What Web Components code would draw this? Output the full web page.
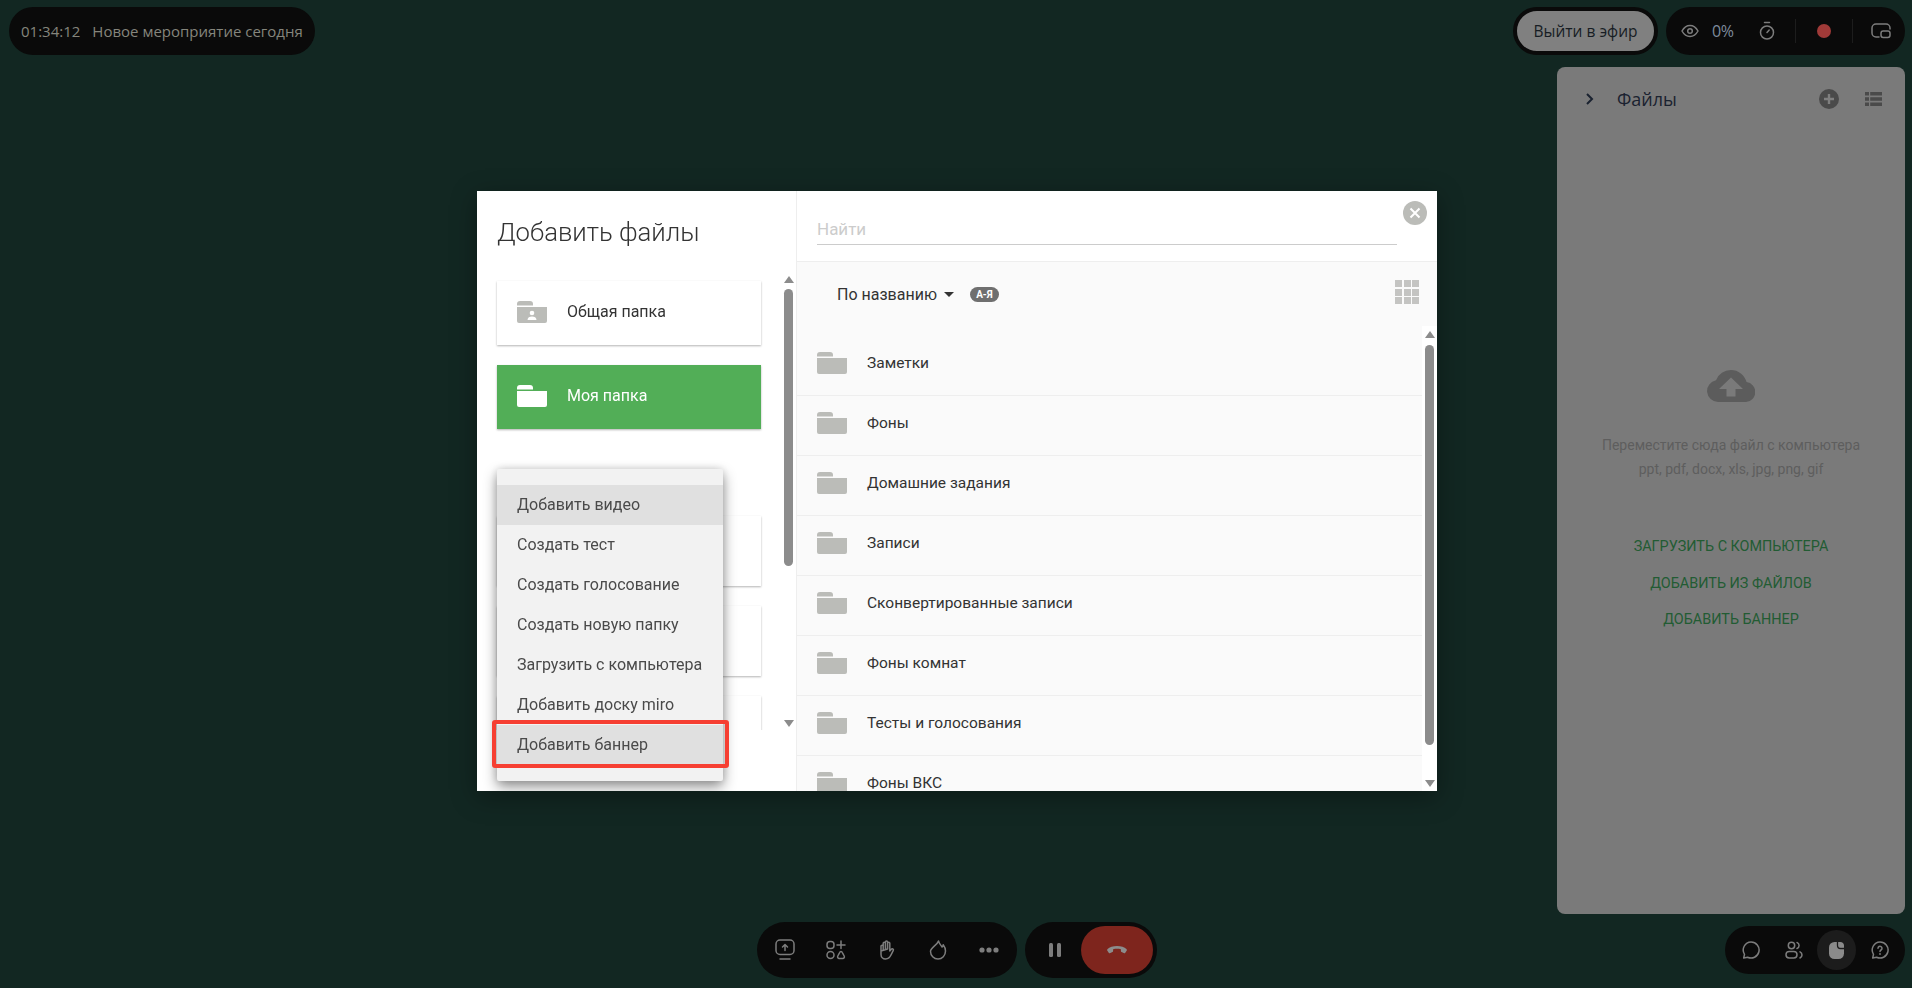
<!DOCTYPE html>
<html lang="ru"><head><meta charset="utf-8"><title>Файлы</title>
<style>
html,body{margin:0;height:100%;background:#122722;overflow:hidden}
</style></head><body>
<app-shell>
  <top-bar slot="top"></top-bar>
  <file-panel slot="panel"></file-panel>
  <bottom-bar slot="bottom"></bottom-bar>
</app-shell>
<add-files-modal></add-files-modal>
<script>
const S='fill="none" stroke="currentColor" stroke-width="1.5" stroke-linecap="round" stroke-linejoin="round"';
const svg=(w,h,body,attrs='')=>`<svg width="${w}" height="${h}" viewBox="0 0 ${w} ${h}" ${attrs}>${body}</svg>`;
const folder=(color,extra='')=>`<svg width="30" height="22" viewBox="0 0 30 22"><path fill="${color}" d="M0 4.600V3a3 3 0 0 1 3-3h10a3 3 0 0 1 3 3v1.600z"/><path fill="${color}" d="M0 6h30v14a2 2 0 0 1-2 2H2a2 2 0 0 1-2-2z"/>${extra}</svg>`;
function def(name,html,init){
  customElements.define(name,class extends HTMLElement{
    connectedCallback(){
      if(this.shadowRoot)return;
      const r=this.attachShadow({mode:'open'});
      r.innerHTML=typeof html==='function'?html(this):html;
      if(init)init(r,this);
    }
  });
}
def('app-shell',`<style>
:host{display:grid;grid-template-rows:67px 847px 1fr;width:1912px;height:988px;box-sizing:border-box;background:#122722}
.mid{display:flex;justify-content:flex-end;padding-right:7px;min-height:0}
</style>
<slot name="top"></slot><div class="mid"><slot name="panel"></slot></div><slot name="bottom"></slot>`);

def('top-bar',`<style>
:host{display:flex;justify-content:space-between;align-items:flex-start;padding:7px 7px 0 9px;font:15px "Open Sans",sans-serif;color:#85857c}
.pill{display:flex;align-items:center;height:48px;background:#0a0a0a;border-radius:24px;box-sizing:border-box}
.left{width:306px;padding-left:12px;gap:12px;white-space:nowrap}
.right{display:flex;gap:8px}
.live{width:145px;height:48px;box-sizing:border-box;border:4px solid #0a0a0a;border-radius:24px;background:#808080;color:#171d24;display:flex;align-items:center;justify-content:center;font-size:15.500px;white-space:nowrap}
.ctl{width:239px;padding-left:12px;color:#7d7d7d}
.s{width:24px;height:24px;display:flex;align-items:center;justify-content:center;flex:none}
.d{width:1px;height:24px;background:#1d1d1d;margin:0 16px;flex:none}
.dot{width:14px;height:14px;border-radius:50%;background:#a03a38}
.pct{margin:0 22px 0 10px;width:21px;color:#7e8a9c;font-size:16px;letter-spacing:-.5px}
svg{display:block}
</style>
<div class="pill left"><span>01:34:12</span><span>Новое мероприятие сегодня</span></div>
<div class="right">
<div class="live">Выйти в эфир</div>
<div class="pill ctl">
<span class="s">${svg(18,14,`<path d="M1 7c2-3.600 4.800-5.500 8-5.500S15 3.400 17 7c-2 3.600-4.800 5.500-8 5.500S3 10.600 1 7z" ${S} stroke-width="1.300"/><circle cx="9" cy="7" r="2.300" ${S} stroke-width="1.300"/>`)}</span>
<span class="pct">0%</span>
<span class="s">${svg(16,20,`<path d="M5.500 1.500h5" ${S}/><circle cx="8" cy="11.500" r="6.500" ${S}/><path d="M8 11.500l2.200-2.500" ${S}/>`)}</span>
<span class="d"></span>
<span class="s"><span class="dot"></span></span>
<span class="d"></span>
<span class="s">${svg(20,16,`<path d="M8 14H5a4 4 0 0 1-4-4V5a4 4 0 0 1 4-4h10a4 4 0 0 1 4 4v1" ${S}/><rect x="10" y="8" width="9" height="6.500" rx="2.200" ${S}/>`)}</span>
</div></div>`);

def('file-panel',`<style>
:host{display:flex;flex-direction:column;align-items:center;width:348px;height:847px;background:#7a7a7a;border-radius:8px;font-family:Roboto,sans-serif;color:#5e5e5e;box-sizing:border-box}
header{align-self:stretch;display:flex;align-items:center;height:64px;padding:0 23px 0 28px;box-sizing:border-box;color:#1a2230}
h2{margin:0 0 0 22px;font:500 18px "Open Sans",sans-serif;flex:1}
.cloud{margin-top:239px}
p{margin:31px 0 0;text-align:center;font-size:14px;line-height:24px;white-space:nowrap}
.links{margin-top:48px;display:flex;flex-direction:column;align-items:center;color:#225c33;font-size:14.400px}
.links span{height:36.500px;line-height:36.500px}
svg{display:block}
.plus{margin-right:26px}
</style>
<header>
${svg(10,14,`<path d="M2 2l5 5-5 5" fill="none" stroke="currentColor" stroke-width="2"/>`)}
<h2>Файлы</h2>
${svg(20,20,`<circle cx="10" cy="10" r="10" fill="#4a4a4a"/><path d="M10 5v10M5 10h10" stroke="#7f7f7f" stroke-width="2.400"/>`,'class="plus"')}
${svg(17,14,`<path fill="#4a4a4a" d="M0 0h4v3.600H0zM5.200 0H17v3.600H5.200zM0 5.200h4v3.600H0zM5.200 5.200H17v3.600H5.200zM0 10.400h4V14H0zM5.200 10.400H17V14H5.200z"/>`)}
</header>
<div class="cloud">${svg(48,32,`<path fill="#5c5c5c" d="M39 32H11a11 11 0 0 1-2-21.800A16 16 0 0 1 24 0a16 16 0 0 1 15.500 12.100A10 10 0 0 1 39 32z"/><path fill="#7a7a7a" d="M24 7.500L36 19h-7.500v7.500h-9V19H12z"/>`)}</div>
<p>Переместите сюда файл с компьютера<br>ppt, pdf, docx, xls, jpg, png, gif</p>
<div class="links"><span>ЗАГРУЗИТЬ С КОМПЬЮТЕРА</span><span>ДОБАВИТЬ ИЗ ФАЙЛОВ</span><span>ДОБАВИТЬ БАННЕР</span></div>`);

def('bottom-bar',`<style>
:host{display:grid;grid-template-columns:1fr auto 1fr;align-items:start;padding:8px 7px 0 0;color:#7d7d7d}
.mid{grid-column:2;display:flex;gap:8px;margin-left:9px}
.pill{display:flex;align-items:center;height:56px;background:#0a0a0a;border-radius:28px;box-sizing:border-box}
.tools{width:260px;padding:0 2px}
.tools span{flex:1;display:flex;justify-content:center}
.call{width:132px;padding:0 4px}
.pause{width:52px;display:flex;justify-content:center}
.end{width:72px;height:48px;border-radius:24px;background:#7e251d;display:flex;align-items:center;justify-content:center;color:#8c8c8c}
.side{justify-self:end;margin-top:4px;height:48px;border-radius:24px;width:180px;background:#0a0a0a;display:flex;align-items:center;justify-content:space-around;padding:0 4px;box-sizing:border-box}
.side span{width:40px;height:40px;border-radius:50%;display:flex;align-items:center;justify-content:center;margin:0 2px}
.side .on{background:#1c1c1c;color:#8a8a8a}
svg{display:block}
</style>
<div class="mid">
<div class="pill tools">
<span>${svg(20,22,`<rect x="1" y="1" width="18" height="14.500" rx="4" ${S} stroke-width="1.300"/><path d="M5 20h10" ${S}/><path d="M10 11.500V5.500M7.500 8L10 5.500 12.500 8" ${S}/>`)}</span>
<span>${svg(20,20,`<rect x="1" y="1.500" width="7" height="7" rx="3" ${S} stroke-width="1.300"/><path d="M15 1v7.500M11 5h8" ${S} stroke-width="1.300"/><circle cx="4.500" cy="15" r="3.500" ${S} stroke-width="1.300"/><path d="M15 11.500c-.8 0-1.200.6-1.500 1.300l-1.700 3.200c-.6 1.200.1 2.500 1.400 2.500h3.600c1.300 0 2-1.300 1.400-2.500l-1.700-3.200c-.3-.7-.7-1.300-1.500-1.300z" ${S} stroke-width="1.300"/>`)}</span>
<span>${svg(18,20,`<path d="M3 11V6.300a1.100 1.100 0 0 1 2.200 0V10M5.200 9V3.300a1.100 1.100 0 0 1 2.200 0V9M7.400 9V2a1.100 1.100 0 0 1 2.200 0v7M9.600 9V3.300a1.100 1.100 0 0 1 2.200 0V11l1.500-1.800c.8-.9 2.600-.1 2 1.100l-2.400 4.800A6 6 0 0 1 7.500 19 4.500 4.500 0 0 1 3 14.500V11z" ${S} stroke-width="1.200"/>`)}</span>
<span>${svg(18,20,`<path d="M9.500 1c.6 2.800 2.600 4.300 3.600 6 .6-.6 1-1.300 1.100-2.200 1.300 1.700 2.300 3.800 2.300 6.200 0 4.400-3.300 8-7.500 8s-7.500-3.600-7.500-7.500C1.500 7.500 8 5.500 9.500 1z" ${S} stroke-width="1.300"/>`)}</span>
<span>${svg(20,6,`<circle cx="3" cy="3" r="2.600" fill="currentColor"/><circle cx="10" cy="3" r="2.600" fill="currentColor"/><circle cx="17" cy="3" r="2.600" fill="currentColor"/>`)}</span>
</div>
<div class="pill call">
<span class="pause">${svg(12,14,`<rect width="4" height="14" rx="1.500" fill="currentColor"/><rect x="8" width="4" height="14" rx="1.500" fill="currentColor"/>`)}</span>
<span class="end">${svg(20,8,`<path fill="currentColor" d="M10 0C6 0 2.500 1 .6 3 0 3.600 0 4.300.4 4.800l1.300 1.900c.4.600 1.100.7 1.700.4l2-1c.5-.3.700-.7.700-1.200V3.300c1.300-.4 2.600-.5 3.900-.5s2.600.1 3.900.5v1.600c0 .5.200.9.700 1.200l2 1c.6.300 1.300.2 1.700-.4l1.300-1.900c.4-.5.400-1.200-.2-1.800C17.500 1 14 0 10 0z"/>`)}</span>
</div>
</div>
<div class="side">
<span>${svg(18,18,`<path d="M9 1a8 8 0 1 1-3.400 15.200L1.700 17l.8-3.700A8 8 0 0 1 9 1z" ${S} stroke-width="1.300"/>`)}</span>
<span>${svg(18,18,`<circle cx="6.500" cy="4.500" r="3.200" ${S} stroke-width="1.300"/><rect x="1" y="10.500" width="11" height="6.500" rx="3.200" ${S} stroke-width="1.300"/><path d="M12 1.500a3.200 3.200 0 0 1 0 6M15 10.800c1.200.6 2 1.800 2 3.200s-.8 2.400-2 3" ${S} stroke-width="1.300"/>`)}</span>
<span class="on">${svg(15,17,`<rect width="15" height="17" rx="5.500" fill="currentColor"/><path d="M8.500 0v3.500a3 3 0 0 0 3 3H15" fill="none" stroke="#1c1c1c" stroke-width="1.300"/><path d="M9.800 0H11a4 4 0 0 1 4 4v1.200h-3.500a1.700 1.700 0 0 1-1.700-1.700z" fill="currentColor"/>`)}</span>
<span>${svg(18,18,`<path d="M9 1a8 8 0 1 1-3.400 15.200L1.700 17l.8-3.700A8 8 0 0 1 9 1z" ${S} stroke-width="1.300"/><path d="M7 7.200a2 2 0 1 1 3 1.800c-.7.400-1 .8-1 1.500" ${S} stroke-width="1.300"/><circle cx="9" cy="13" r=".9" fill="currentColor"/>`)}</span>
</div>`);

def('x-scrollbar',h=>`<style>
:host{display:flex;flex-direction:column;align-items:center;width:15px;flex:none;background:#fff;box-sizing:border-box;padding:${h.getAttribute('pt')||3}px 0 ${h.getAttribute('pb')||3}px}
i{display:block;width:0;height:0;border-left:5px solid transparent;border-right:5px solid transparent}
.u{border-bottom:7px solid #8c8c8c}
.d{border-top:7px solid #8c8c8c;margin-top:auto}
b{display:block;width:9px;height:${h.getAttribute('thumb')}px;margin-top:${h.getAttribute('gap')||7}px;background:#8c8c8c;border-radius:5px}
</style><i class="u"></i><b></b><i class="d"></i>`);

def('folder-card',h=>`<style>
:host{display:flex;align-items:center;height:${h.hasAttribute('tall')?70:64}px;margin-bottom:20px;flex:none;box-sizing:border-box;padding-left:20px;background:${h.hasAttribute('active')?'#52ae57':'#fff'};color:${h.hasAttribute('active')?'#fff':'#333'};box-shadow:0 1px 2px rgba(0,0,0,.3);font:16px Roboto,sans-serif}
span{margin:-3px 0 0 20px}
svg{display:block;margin-top:-2px}
</style>${h.getAttribute('icon')==='shared'?folder('#bbbcb8','<circle cx="15" cy="12" r="2.300" fill="#fff"/><path d="M10.500 19c0-2.500 2-3.500 4.500-3.500s4.500 1 4.500 3.500z" fill="#fff"/>'):h.hasAttribute('active')?folder('#fff'):folder('#bbbcb8')}<span><slot></slot></span>`);

def('folder-row',`<style>
:host{display:flex;align-items:center;height:60px;flex:none;box-sizing:border-box;padding:0 0 5px 20px;border-bottom:1px solid #eee;font:15.500px Roboto,sans-serif;color:#333}
span{margin-left:20px}
svg{display:block}
</style>${folder('#bbbcb8')}<span><slot></slot></span>`);

def('menu-item',h=>`<style>
:host{display:flex;align-items:center;height:40px;box-sizing:border-box;padding:0 0 2px 20px;background:${h.hasAttribute('hl')?'#e0e0e0':'transparent'};color:#4a4a4a;font:16px Roboto,sans-serif}
</style><slot></slot>`);

def('add-menu',`<style>
:host{position:absolute;left:20px;top:278px;width:226px;box-sizing:border-box;padding:16px 0;background:#f2f2f2;border-radius:2px;box-shadow:0 6px 14px rgba(0,0,0,.42),0 0 8px rgba(0,0,0,.14);z-index:3}
.mark{position:absolute;left:-5px;top:251px;width:237px;height:48px;box-sizing:border-box;border:4px solid #f63f32;border-radius:3px}
</style><slot></slot><div class="mark"></div>`);

def('add-files-modal',`<style>
:host{position:fixed;inset:0;display:flex;align-items:center;justify-content:center;padding:0 0 6px 2px;box-sizing:border-box;z-index:10}
.m{position:relative;display:flex;width:960px;height:600px;background:#fff;box-shadow:0 6px 24px rgba(0,0,0,.35);font-family:Roboto,sans-serif;overflow:hidden}
.l{width:320px;flex:none;display:flex;flex-direction:column;border-right:1px solid #eee;box-sizing:border-box;position:relative}
h1{margin:0;height:81px;box-sizing:border-box;padding:24px 0 0 20px;font:300 25.700px/34px Roboto,sans-serif;color:#333;white-space:nowrap}
.ls{display:flex;height:458px}
.cards{flex:1;display:flex;flex-direction:column;padding:9px 20px 0 20px;overflow:hidden;min-width:0}
.r{flex:1;display:flex;flex-direction:column;min-width:0;background:#fafafa}
.search{height:71px;flex:none;box-sizing:border-box;padding:21px 40px 0 20px;background:#fff;border-bottom:1px solid #eee}
.inp{height:33px;box-sizing:border-box;border-bottom:1px solid #ccc;color:#ccc;font-size:17px;line-height:35px}
.sort{height:64px;flex:none;box-sizing:border-box;display:flex;align-items:center;padding:0 18px 0 40px;color:#333;font-size:16px}
.car{width:0;height:0;border:5px solid transparent;border-top:5px solid #333;border-bottom:0;margin-left:7px}
.az{margin-left:16px;width:29px;height:15px;border-radius:8px;background:#6f6f6f;color:#fff;font:700 10px/15px Roboto,sans-serif;text-align:center}
.grid{margin-left:auto;display:grid;grid-template-columns:repeat(3,7px);grid-auto-rows:7px;gap:1.500px;margin-top:-4px}
.grid i{background:#c4c4c2}
.lw{flex:1;display:flex;min-height:0}
.list{flex:1;display:flex;flex-direction:column;padding-top:10px;overflow:hidden;min-width:0}
.close{position:absolute;right:10px;top:10px;width:24px;height:24px;border-radius:50%;background:#bbbcb8;display:flex;align-items:center;justify-content:center}
</style>
<div class="m">
<div class="l">
<h1>Добавить файлы</h1>
<div class="ls">
<div class="cards">
<folder-card icon="shared">Общая папка</folder-card>
<folder-card active>Моя папка</folder-card>
<folder-card style="margin-top:67px" tall></folder-card>
<folder-card tall></folder-card>
<folder-card tall></folder-card>
</div>
<x-scrollbar thumb="277" gap="6" pt="4"></x-scrollbar>
</div>
<add-menu>
<menu-item hl>Добавить видео</menu-item>
<menu-item>Создать тест</menu-item>
<menu-item>Создать голосование</menu-item>
<menu-item>Создать новую папку</menu-item>
<menu-item>Загрузить с компьютера</menu-item>
<menu-item>Добавить доску miro</menu-item>
<menu-item hl>Добавить баннер</menu-item>
</add-menu>
</div>
<div class="r">
<div class="search"><div class="inp">Найти</div></div>
<div class="sort"><span>По названию</span><span class="car"></span><span class="az">А-Я</span><span class="grid"><i></i><i></i><i></i><i></i><i></i><i></i><i></i><i></i><i></i></span></div>
<div class="lw">
<div class="list">
<folder-row>Заметки</folder-row>
<folder-row>Фоны</folder-row>
<folder-row>Домашние задания</folder-row>
<folder-row>Записи</folder-row>
<folder-row>Сконвертированные записи</folder-row>
<folder-row>Фоны комнат</folder-row>
<folder-row>Тесты и голосования</folder-row>
<folder-row>Фоны ВКС</folder-row>
</div>
<x-scrollbar thumb="400" gap="7" pt="5" pb="4"></x-scrollbar>
</div>
</div>
<div class="close">${svg(12,12,`<path d="M1.500 1.500l9 9M10.500 1.500l-9 9" stroke="#fff" stroke-width="2"/>`)}</div>
</div>`);
</script>
</body></html>
